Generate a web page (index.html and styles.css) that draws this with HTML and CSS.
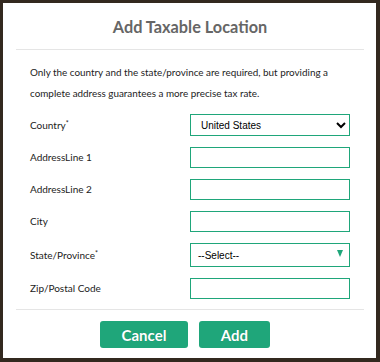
FILE: index.html
```html
<!DOCTYPE html>
<html>
<head>
<meta charset="utf-8">
<link rel="stylesheet" href="styles.css">
</head>
<body>
<div class="dialog">
  <div class="header"><h1 class="title">Add Taxable Location</h1></div>
  <div class="content">
    <p class="intro">Only the country and the state/province are required, but providing a complete address guarantees a more precise tax rate.</p>
    <div class="form">
      <div class="row row-country">
        <label class="label">Country<span class="req">*</span></label>
        <select class="select native"><option>United States</option></select>
      </div>
      <div class="row">
        <label class="label">AddressLine 1</label>
        <input class="input" type="text">
      </div>
      <div class="row">
        <label class="label">AddressLine 2</label>
        <input class="input" type="text">
      </div>
      <div class="row">
        <label class="label">City</label>
        <input class="input" type="text">
      </div>
      <div class="row row-state">
        <label class="label">State/Province<span class="req">*</span></label>
        <div class="custom-select"><span class="cs-text">--Select--</span><span class="cs-arrow"></span></div>
      </div>
      <div class="row">
        <label class="label">Zip/Postal Code</label>
        <input class="input" type="text">
      </div>
    </div>
  </div>
  <div class="footer">
    <button class="btn btn-cancel">Cancel</button>
    <button class="btn btn-add">Add</button>
  </div>
</div>
</body>
</html>
```
FILE: styles.css
```css
html, body {
  margin: 0;
  padding: 0;
}
body {
  width: 380px;
  height: 362px;
  background: #33291f;
  padding: 3px 4px 4px 3px;
  box-sizing: border-box;
  font-family: Lato, "Noto Sans", sans-serif;
}
.dialog {
  background: #fff;
  height: 355px;
  padding: 0 12px 0 13px;
  box-sizing: border-box;
  display: flex;
  flex-direction: column;
}
.header {
  height: 46px;
  border-bottom: 1px solid #e5e5e5;
  display: flex;
  align-items: center;
  justify-content: center;
}
.title {
  margin: 0;
  margin-top: 1px;
  font-size: 16.3px;
  font-weight: 700;
  color: #666;
}
.content {
  padding: 12px 14px 0 14px;
}
.intro {
  margin: 0;
  font-size: 9.9px;
  line-height: 21px;
  color: #222;
}
.form {
  margin-top: 10px;
  display: flex;
  flex-direction: column;
  gap: 11px;
}
.row {
  display: flex;
  justify-content: space-between;
  align-items: center;
  height: 21px;
}
.row-country { height: 22px; }
.row-state { height: 24px; }
.label {
  font-size: 10px;
  color: #222;
  align-self: center;
  margin-top: -1px;
}
.req {
  font-size: 7px;
  vertical-align: 3px;
}
.input {
  width: 160px;
  height: 21px;
  box-sizing: border-box;
  border: 1px solid #1fa67a;
  margin: 0;
  padding: 0 4px;
  border-radius: 0;
  outline: none;
}
.select {
  width: 160px;
  height: 22px;
  box-sizing: border-box;
  border: 1px solid #1fa67a;
  border-radius: 0;
  margin: 0;
  padding: 0 0 0 6px;
  font-family: "Liberation Sans", Arial, sans-serif;
  font-size: 10px;
  color: #000;
  background: #fff;
}
.custom-select {
  width: 160px;
  height: 24px;
  box-sizing: border-box;
  border: 1px solid #1fa67a;
  display: flex;
  align-items: center;
  justify-content: space-between;
  padding: 0 6px 0 7px;
}
.cs-text {
  font-family: "Liberation Sans", Arial, sans-serif;
  font-size: 10px;
  color: #000;
}
.cs-arrow {
  width: 0;
  height: 0;
  border-left: 3.5px solid transparent;
  border-right: 3.5px solid transparent;
  border-top: 7px solid #1fa67a;
  margin-top: -4px;
}
.footer {
  margin-top: 10px;
  border-top: 1px solid #e5e5e5;
  display: flex;
  justify-content: center;
  gap: 11px;
  padding-top: 11px;
  padding-right: 10px;
}
.btn {
  height: 27px;
  border: none;
  border-radius: 3px;
  background: #1fa67a;
  color: #fff;
  font-family: Lato, "Noto Sans", sans-serif;
  font-weight: 700;
  font-size: 15px;
  padding: 0;
  text-shadow: 0 0 1px rgba(0,0,0,0.25);
}
.btn-cancel { width: 88px; }
.btn-add { width: 71px; }
```
